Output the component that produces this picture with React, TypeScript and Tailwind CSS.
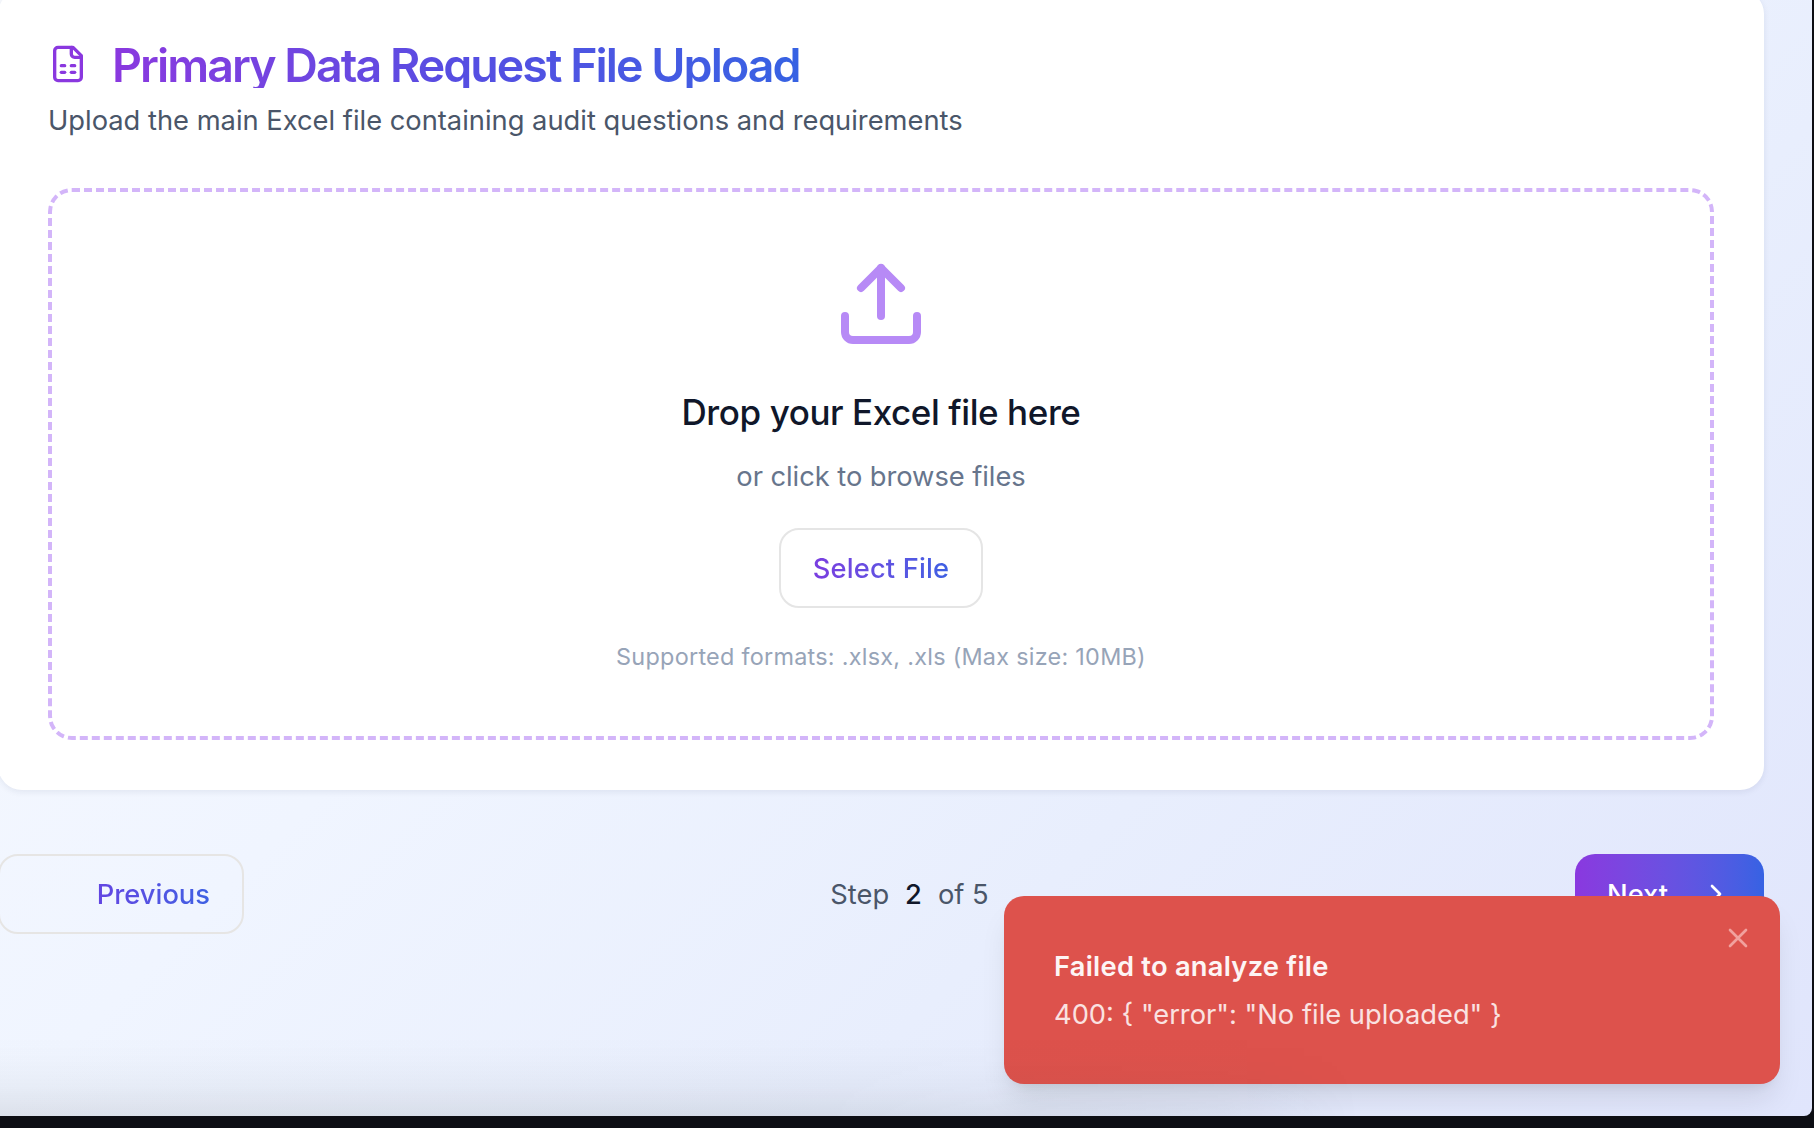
import React from "react";

const UploadIcon = () => (
  <svg className="h-24 w-24 text-[#b78af6]" viewBox="0 0 24 24" fill="none" stroke="currentColor" strokeWidth="2" strokeLinecap="round" strokeLinejoin="round">
    <path d="M21 15v4a2 2 0 0 1-2 2H5a2 2 0 0 1-2-2v-4" />
    <polyline points="17 8 12 3 7 8" />
    <line x1="12" x2="12" y1="3" y2="15" />
  </svg>
);

const SheetIcon = () => (
  <svg className="h-10 w-10 shrink-0 text-[#8a38df]" viewBox="0 0 24 24" fill="none" stroke="currentColor" strokeWidth="2" strokeLinecap="round" strokeLinejoin="round">
    <path d="M15 2H6a2 2 0 0 0-2 2v16a2 2 0 0 0 2 2h12a2 2 0 0 0 2-2V7Z" />
    <path d="M14 2v4a2 2 0 0 0 2 2h4" />
    <path d="M8 13h2" />
    <path d="M14 13h2" />
    <path d="M8 17h2" />
    <path d="M14 17h2" />
  </svg>
);

export default function App() {
  return (
    <div className="relative h-[1128px] w-[1814px] overflow-hidden bg-[#0d0e14] font-['Inter',sans-serif] text-[27.3px] leading-[42px]">
      <div className="relative h-[1116px] w-[1812px] overflow-hidden rounded-br-lg bg-[linear-gradient(135deg,#f8fafe_0%,#f0f5ff_38%,#e8eefd_66%,#e0e5fc_100%)]">
        <main className="-mt-2.5 -ml-0.5 w-[1766px]">
          <section className="rounded-3xl bg-white p-[50px] shadow-[0_2px_6px_rgba(30,40,80,0.08)]">
            <div className="flex items-center gap-6">
              <SheetIcon />
              <h1 className="h-12 bg-linear-to-r from-[#8a38df] via-[#564de2] to-[#3662e3] bg-clip-text text-[46.5px] leading-[50px] font-semibold tracking-[-1.95px] whitespace-nowrap text-transparent">Primary Data Request File Upload</h1>
            </div>
            <p className="mt-3 h-10 whitespace-nowrap text-[#4a5669]">Upload the main Excel file containing audit questions and requirements</p>
            <div className="mt-12 flex h-[552px] flex-col items-center rounded-3xl border-4 border-dashed border-[#d3b5f9] pt-16 text-center">
              <UploadIcon />
              <h2 className="mt-8 text-[35px] leading-[56px] font-medium tracking-[-0.42px] text-[#10172a]">Drop your Excel file here</h2>
              <p className="mt-4 h-10 tracking-[-0.05px] text-[#67758c]">or click to browse files</p>
              <button className="mt-8 h-20 w-[204px] rounded-[20px] border-2 border-[#e5e5e5] pt-0.5 font-medium tracking-[0.15px]">
                <span className="bg-linear-to-r from-[#7a3de0] to-[#3d60e3] bg-clip-text text-transparent">Select File</span>
              </button>
              <p className="mt-8 text-[23.4px] leading-[34px] tracking-[0.27px] text-[#97a4b8]">Supported formats: .xlsx, .xls (Max size: 10MB)</p>
            </div>
          </section>
          <nav className="mt-16 flex h-20 items-center justify-between">
            <button className="flex h-20 w-[246px] items-center justify-end rounded-[20px] border-2 border-[#e6e5e4] pt-0.5 pr-8 font-medium">
              <span className="bg-linear-to-r from-[#6245e2] to-[#3d60e3] bg-clip-text text-transparent">Previous</span>
            </button>
            <div className="flex gap-4 pt-0.5 text-[#4a5669]">
              <span>Step</span>
              <span className="font-medium text-[#10172a]">2</span>
              <span>of 5</span>
            </div>
            <button className="flex h-20 w-[189px] items-center justify-between rounded-[20px] bg-linear-to-r from-[#8a38df] to-[#3662e3] px-8 font-medium text-white">
              <span className="pt-0.5">Next</span>
              <svg className="h-8 w-8" viewBox="0 0 24 24" fill="none" stroke="currentColor" strokeWidth="2" strokeLinecap="round" strokeLinejoin="round"><path d="m9 18 6-6-6-6" /></svg>
            </button>
          </nav>
        </main>
        <div className="absolute right-8 bottom-8 h-[188px] w-[776px] rounded-[20px] bg-[#dd524c] p-[50px] shadow-[0_20px_30px_-6px_rgba(0,0,0,0.10),0_8px_12px_-8px_rgba(0,0,0,0.10)]">
          <p className="h-10 font-semibold tracking-[0.25px] text-[#fdf5f5]">Failed to analyze file</p>
          <p className="mt-2 h-10 text-[#fae2e1]">{'400: { "error": "No file uploaded" }'}</p>
          <svg className="absolute top-[26px] right-[26px] h-8 w-8 text-[#f1a19e]" viewBox="0 0 24 24" fill="none" stroke="currentColor" strokeWidth="2" strokeLinecap="round" strokeLinejoin="round"><path d="M18 6 6 18M6 6l12 12" /></svg>
        </div>
        {/* soft shade rising from the window's lower edge */}
        <div className="pointer-events-none absolute bottom-0 left-0 h-20 w-[1360px] bg-[linear-gradient(to_top,rgba(20,30,30,0.09),rgba(20,30,30,0.035)_38%,rgba(20,30,30,0.01)_70%,transparent)] [mask-image:linear-gradient(to_right,black_60%,rgba(0,0,0,0.6)_90%,transparent)]" />
      </div>
    </div>
  );
}
